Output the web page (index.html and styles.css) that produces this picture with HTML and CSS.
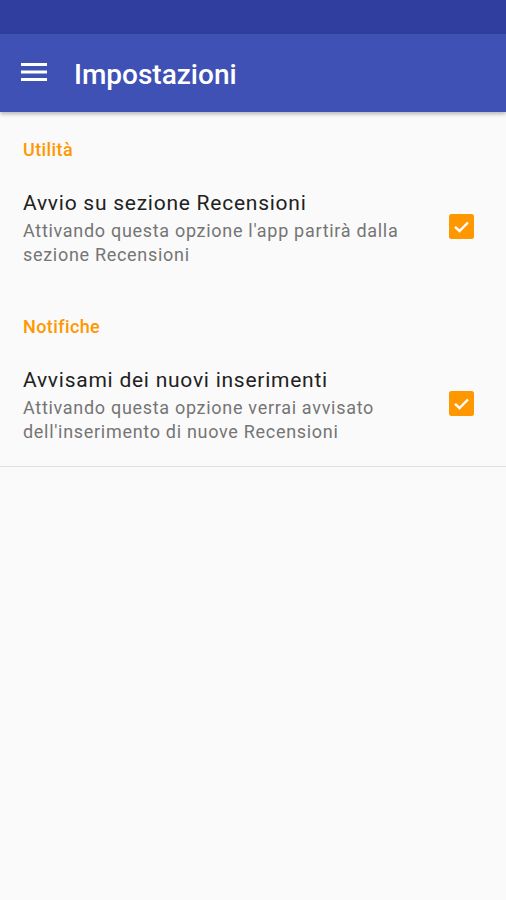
FILE: index.html
```html
<!DOCTYPE html>
<html>
<head>
<meta charset="utf-8">
<link rel="stylesheet" href="styles.css">
</head>
<body>
<div class="status"></div>
<header class="toolbar">
  <svg class="menu" width="26" height="20" viewBox="0 0 26 20"><rect x="0" y="1" width="26" height="3"/><rect x="0" y="8.5" width="26" height="3"/><rect x="0" y="16" width="26" height="3"/></svg>
  <h1 class="title">Impostazioni</h1>
</header>
<main class="list">
  <div class="cat">Utilità</div>
  <div class="pref">
    <div class="texts">
      <div class="ptitle">Avvio su sezione Recensioni</div>
      <div class="psum">Attivando questa opzione l'app partirà dalla sezione Recensioni</div>
    </div>
    <div class="cb"><svg width="25" height="25" viewBox="0 0 25 25"><rect width="25" height="25" rx="2.5" fill="#FF9800"/><path d="M6 12.8 L10.5 17 L19 8.5" fill="none" stroke="#fff" stroke-width="2.4"/></svg></div>
  </div>
  <div class="cat cat2">Notifiche</div>
  <div class="pref">
    <div class="texts">
      <div class="ptitle">Avvisami dei nuovi inserimenti</div>
      <div class="psum">Attivando questa opzione verrai avvisato dell'inserimento di nuove Recensioni</div>
    </div>
    <div class="cb"><svg width="25" height="25" viewBox="0 0 25 25"><rect width="25" height="25" rx="2.5" fill="#FF9800"/><path d="M6 12.8 L10.5 17 L19 8.5" fill="none" stroke="#fff" stroke-width="2.4"/></svg></div>
  </div>
  <div class="divider"></div>
</main>
</body>
</html>
```
FILE: styles.css
```css
html, body { margin: 0; padding: 0; }
body {
  background: #FAFAFA;
  font-family: Roboto, "Noto Sans", sans-serif;
  width: 506px;
  height: 900px;
  overflow: hidden;
}
.status { height: 34px; background: #303F9F; }
.toolbar {
  height: 78px;
  background: #3F51B5;
  display: flex;
  align-items: center;
  padding-left: 21px;
  box-shadow: 0 2px 4px rgba(0,0,0,0.28);
  position: relative;
}
.menu { fill: #fff; margin-top: -2px; }
.title {
  margin: 2px 0 0 27px;
  color: #fff;
  font-size: 28px;
  font-weight: 500;
}
.list { padding-top: 26px; }
.cat {
  color: #FF9800;
  font-size: 18px;
  font-weight: 500;
  letter-spacing: 0.4px;
  padding-left: 23px;
  height: 24px;
  line-height: 24px;
}
.cat2 { margin-top: 48px; }
.pref {
  display: flex;
  align-items: center;
  padding: 29px 32px 0 23px;
}
.texts { flex: 1; }
.ptitle {
  color: #212121;
  font-size: 21px;
  letter-spacing: 0.75px;
  line-height: 24px;
  margin-bottom: 4px;
}
.psum {
  color: #757575;
  font-size: 18px;
  letter-spacing: 0.7px;
  line-height: 24px;
  max-width: 400px;
}
.cb { width: 25px; height: 25px; margin-top: -6px; }
.cb svg { display: block; }
.divider { height: 1px; background: #E0E0E0; margin-top: 22px; }
```
